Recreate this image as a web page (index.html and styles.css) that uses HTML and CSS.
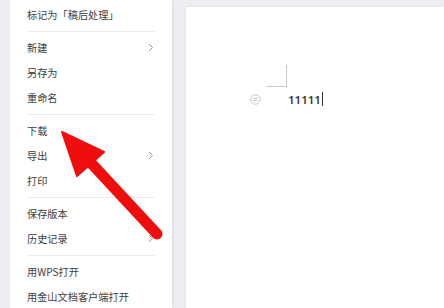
FILE: index.html
```html
<!DOCTYPE html>
<html lang="zh">
<head>
<meta charset="utf-8">
<link rel="stylesheet" href="styles.css">
</head>
<body>
<div class="app">
  <div class="menu">
    <div class="item">标记为「稿后处理」</div>
    <div class="divider"></div>
    <div class="item">新建<svg class="chev" width="6" height="9" viewBox="0 0 6 9"><polyline points="1,1 4.5,4.5 1,8" fill="none" stroke="#9a9a9a" stroke-width="1"/></svg></div>
    <div class="item">另存为</div>
    <div class="item">重命名</div>
    <div class="divider"></div>
    <div class="item">下载</div>
    <div class="item">导出<svg class="chev" width="6" height="9" viewBox="0 0 6 9"><polyline points="1,1 4.5,4.5 1,8" fill="none" stroke="#9a9a9a" stroke-width="1"/></svg></div>
    <div class="item">打印</div>
    <div class="divider"></div>
    <div class="item">保存版本</div>
    <div class="item">历史记录<svg class="chev" width="6" height="9" viewBox="0 0 6 9"><polyline points="1,1 4.5,4.5 1,8" fill="none" stroke="#9a9a9a" stroke-width="1"/></svg></div>
    <div class="divider"></div>
    <div class="item">用WPS打开</div>
    <div class="item">用金山文档客户端打开</div>
  </div>
  <div class="page">
    <div class="corner"></div>
    <div class="line">
      <svg class="para" width="11" height="11" viewBox="0 0 11 11"><circle cx="5.5" cy="5.5" r="4.7" fill="none" stroke="#c4c4c4" stroke-width="1"/><line x1="3.4" y1="4.4" x2="7.6" y2="4.4" stroke="#c4c4c4" stroke-width="1"/><line x1="3.4" y1="6.6" x2="7.6" y2="6.6" stroke="#c4c4c4" stroke-width="1"/></svg>
      <span class="text">11111</span><span class="caret"></span>
    </div>
  </div>
</div>
<svg class="arrow" width="444" height="308" viewBox="0 0 444 308">
  <line x1="92" y1="164" x2="157" y2="234" stroke="#f00d0d" stroke-width="11" stroke-linecap="round"/>
  <polygon points="62,132 104,152 77,176" fill="#f00d0d" stroke="#f00d0d" stroke-width="2" stroke-linejoin="round"/>
</svg>
</body>
</html>
```
FILE: styles.css
```css
html, body {
  margin: 0;
  padding: 0;
}
body {
  width: 444px;
  height: 308px;
  overflow: hidden;
  background: #eceef2;
  font-family: "Noto Sans CJK SC", "Noto Sans", sans-serif;
  position: relative;
}
.app {
  display: flex;
  height: 308px;
  padding-left: 10px;
  box-sizing: border-box;
}
.menu {
  width: 162px;
  background: #ffffff;
  padding-top: 2px;
  box-shadow: 1px 0 3px rgba(0, 0, 0, 0.08);
  flex: none;
}
.item {
  height: 25px;
  line-height: 25px;
  padding: 0 18px 0 17px;
  font-size: 10.2px;
  color: #3d3d3d;
  display: flex;
  align-items: center;
  justify-content: space-between;
  white-space: nowrap;
}
.chev {
  display: block;
}
.divider {
  height: 1px;
  background: #ebebeb;
  margin: 4px 17px 3px 17px;
}
.page {
  flex: 1;
  margin-left: 14px;
  margin-top: 7px;
  background: #ffffff;
  padding-top: 58px;
  padding-left: 64px;
  box-shadow: 0 0 3px rgba(0, 0, 0, 0.06);
}
.corner {
  width: 21px;
  height: 22px;
  margin-left: 16px;
  border-right: 1px solid #c8c8c8;
  border-bottom: 1px solid #c8c8c8;
  box-sizing: border-box;
}
.line {
  display: flex;
  align-items: center;
  height: 14px;
  margin-top: 5px;
}
.para {
  display: block;
}
.text {
  margin-left: 27px;
  font-family: "Noto Sans", sans-serif;
  font-weight: 600;
  font-size: 11.5px;
  color: #3a3a3a;
}
.caret {
  width: 1px;
  height: 14px;
  background: #333;
  margin-left: 1px;
}
.arrow {
  position: absolute;
  left: 0;
  top: 0;
  pointer-events: none;
}
```
